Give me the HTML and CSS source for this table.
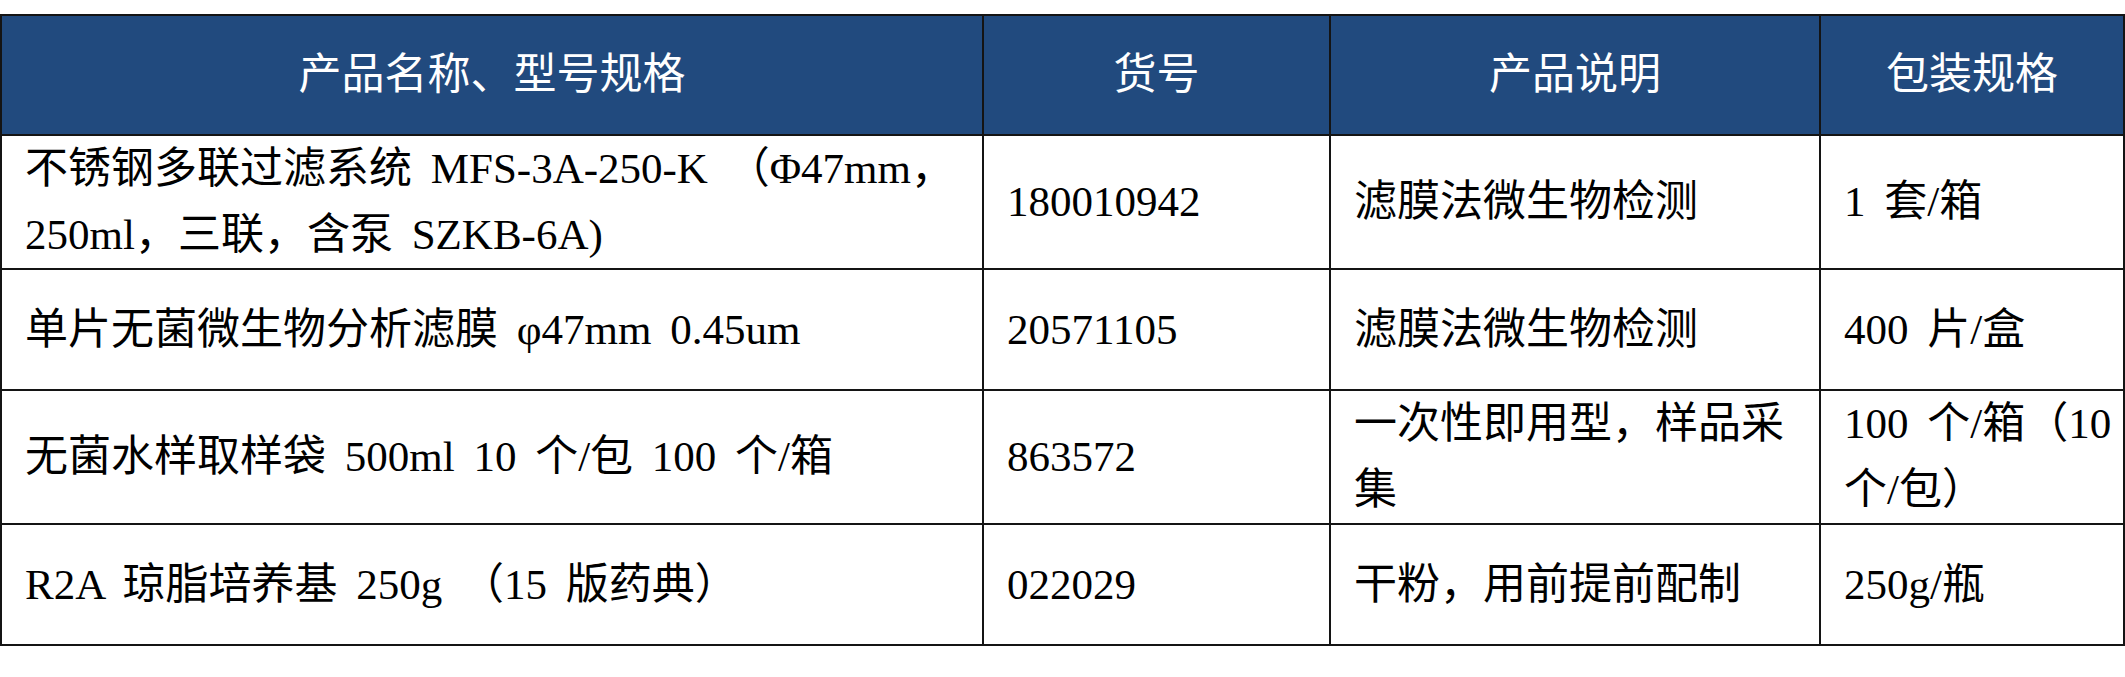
FILE: index.html
```html
<!DOCTYPE html>
<html lang="zh-CN">
<head>
<meta charset="utf-8">
<title>产品列表</title>
<link rel="stylesheet" href="styles.css">
</head>
<body>
<table class="products">
  <colgroup>
    <col class="c-name">
    <col class="c-code">
    <col class="c-desc">
    <col class="c-pack">
  </colgroup>
  <thead>
    <tr class="head-row">
      <th>产品名称、型号规格</th>
      <th>货号</th>
      <th>产品说明</th>
      <th>包装规格</th>
    </tr>
  </thead>
  <tbody>
    <tr>
      <td>不锈钢多联过滤系统 MFS-3A-250-K （Φ47mm，250ml，三联，含泵 SZKB-6A)</td>
      <td>180010942</td>
      <td>滤膜法微生物检测</td>
      <td>1 套/箱</td>
    </tr>
    <tr>
      <td>单片无菌微生物分析滤膜 φ47mm 0.45um</td>
      <td>20571105</td>
      <td>滤膜法微生物检测</td>
      <td>400 片/盒</td>
    </tr>
    <tr>
      <td>无菌水样取样袋 500ml 10 个/包 100 个/箱</td>
      <td>863572</td>
      <td>一次性即用型，样品采集</td>
      <td>100 个/箱（10 个/包）</td>
    </tr>
    <tr>
      <td>R2A 琼脂培养基 250g （15 版药典）</td>
      <td>022029</td>
      <td>干粉，用前提前配制</td>
      <td>250g/瓶</td>
    </tr>
  </tbody>
</table>
</body>
</html>
```

FILE: styles.css
```css
html, body {
  margin: 0;
  padding: 0;
  background: #ffffff;
}

body {
  padding-top: 14px;
  font-family: "Liberation Serif", "Noto Sans CJK SC", serif;
  color: #000000;
}

.products {
  border-collapse: collapse;
  width: 2123px;
  table-layout: fixed;
  font-size: 43px;
  line-height: 66px;
}

.c-name { width: 982px; }
.c-code { width: 347px; }
.c-desc { width: 490px; }
.c-pack { width: 304px; }

.products th,
.products td {
  border: 2px solid #141414;
  vertical-align: middle;
  text-align: left;
  padding: 0 6px 0 23px;
  font-weight: 400;
}

.products td {
  word-spacing: 8px;
}

.products th {
  background: #214a7e;
  color: #ffffff;
  text-align: center;
  padding: 0;
}

.head-row {
  height: 120px;
}

.products tbody tr {
  height: 121px;
}
```
